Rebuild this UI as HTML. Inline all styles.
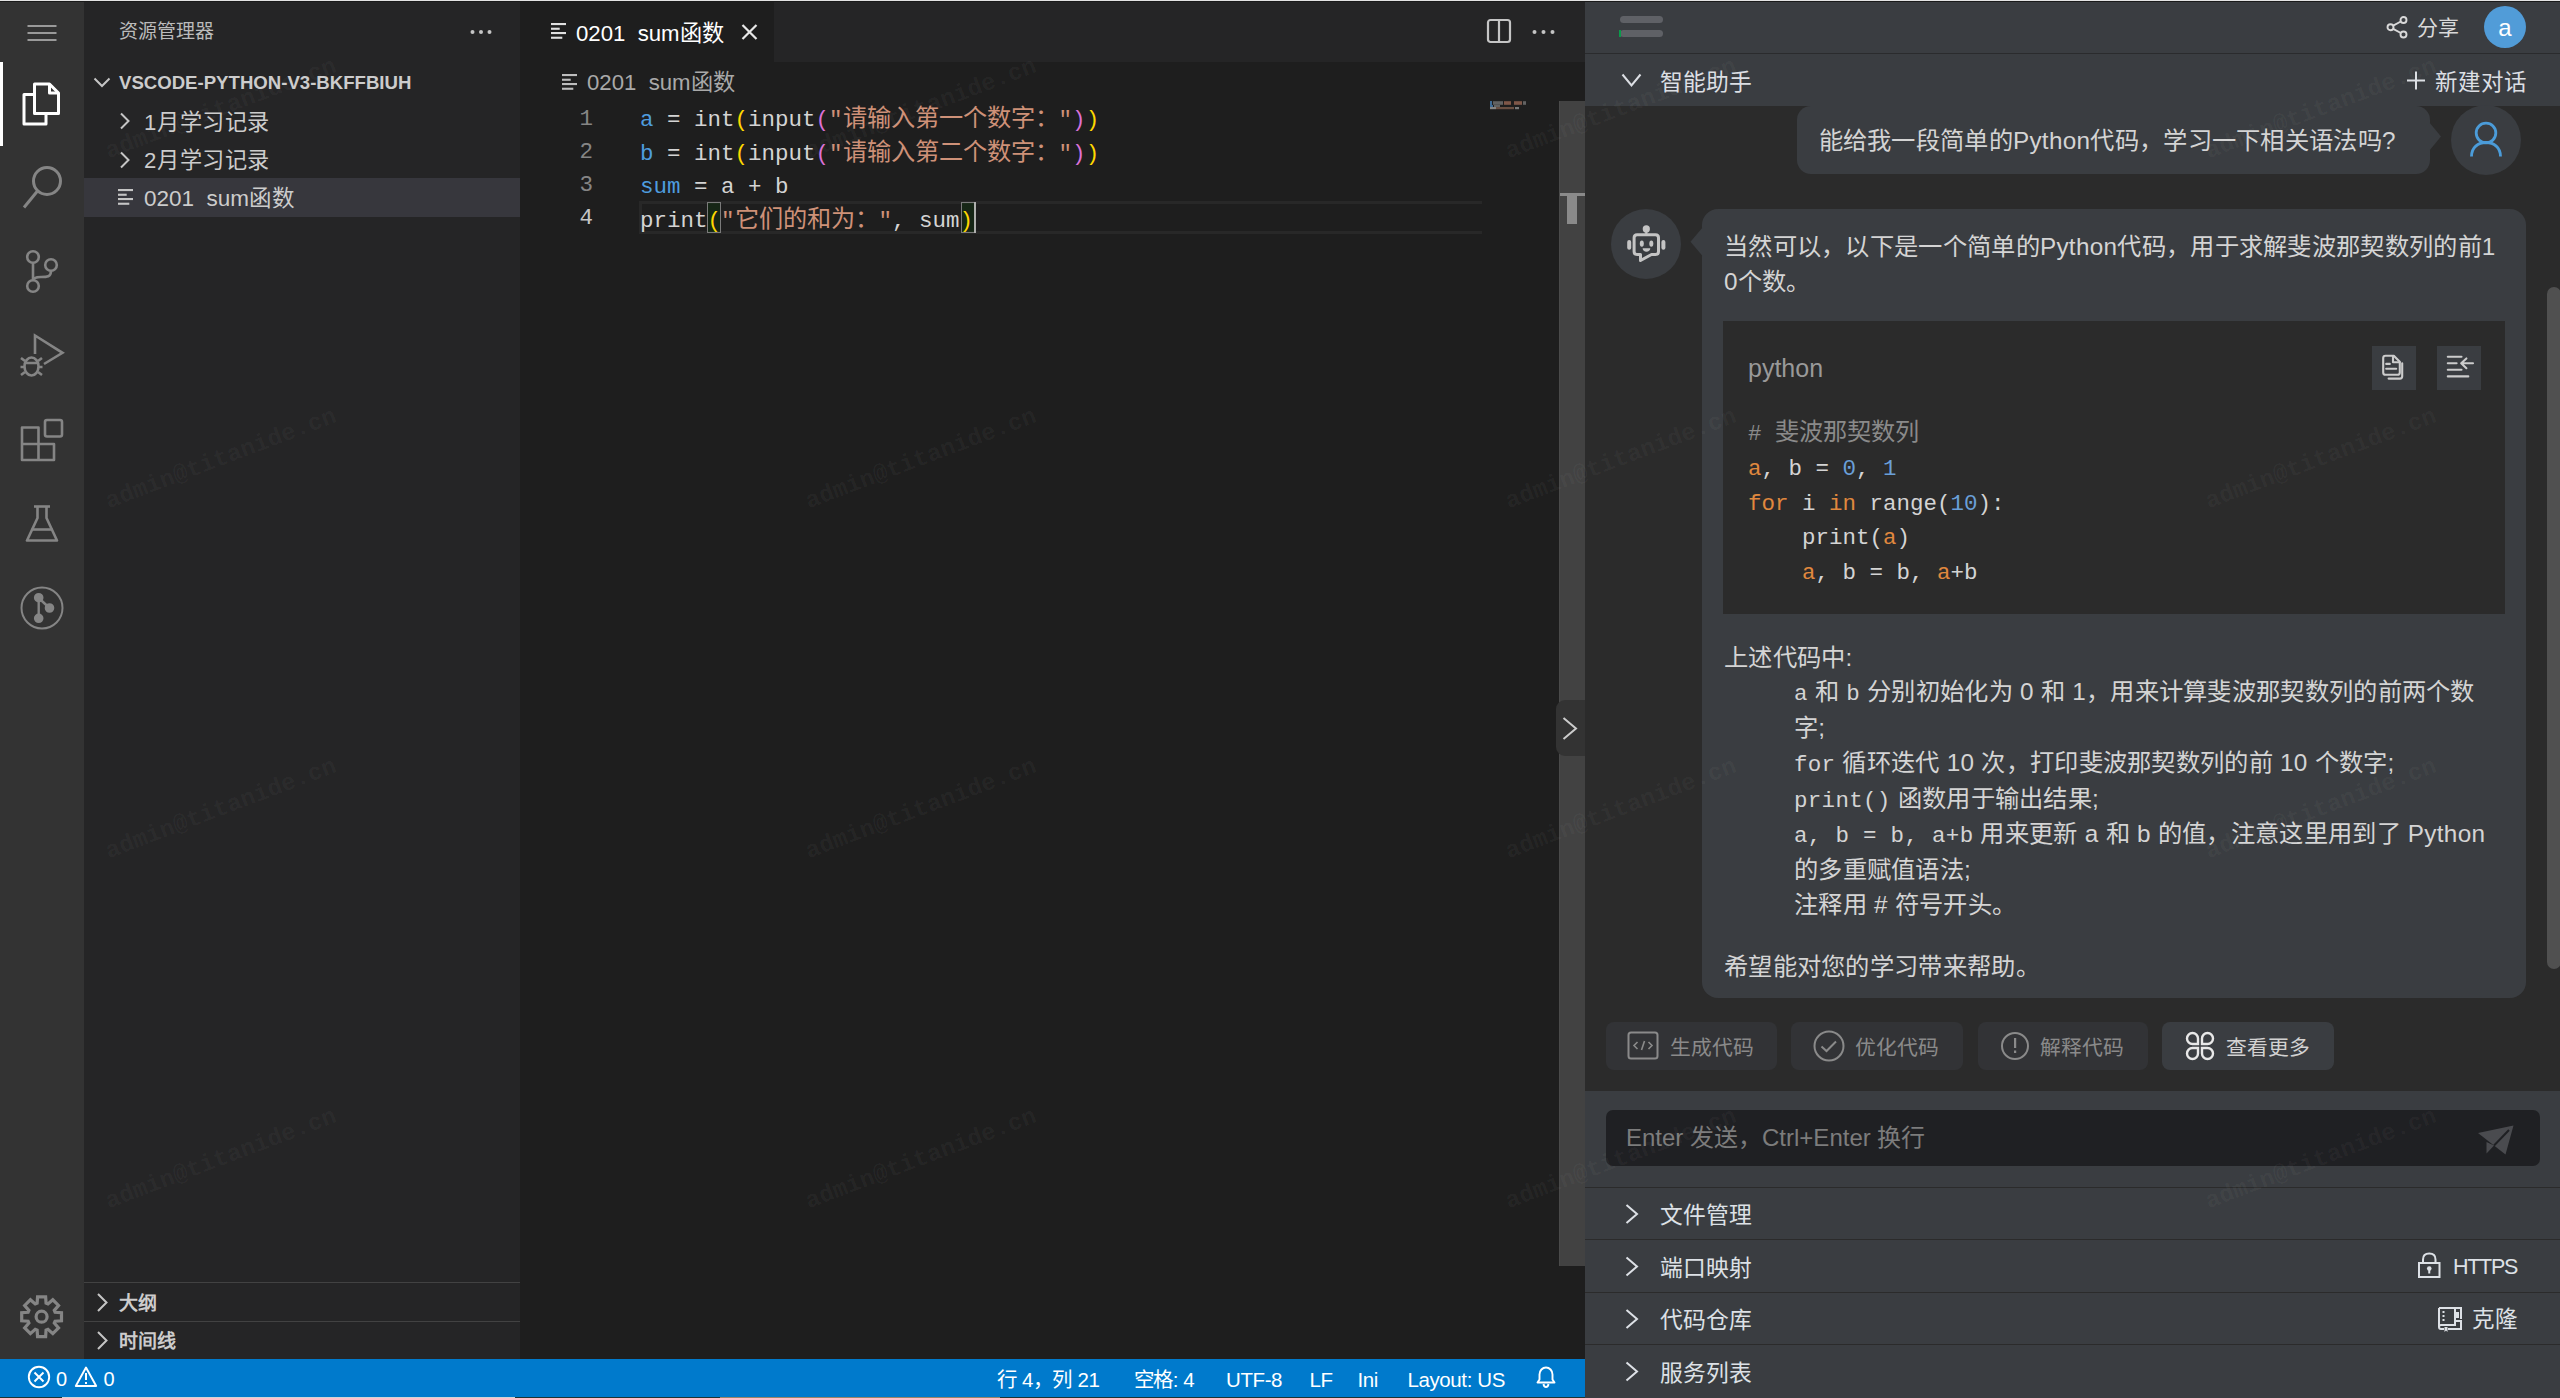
<!DOCTYPE html>
<html lang="zh-CN"><head><meta charset="utf-8">
<style>
*{margin:0;padding:0;box-sizing:border-box}
html,body{width:2560px;height:1398px;overflow:hidden;background:#1e1e1e;font-family:"Liberation Sans",sans-serif;color:#ccc}
.a{position:absolute}
.t{position:absolute;white-space:nowrap}
.mono{font-family:"Liberation Mono",monospace}
svg{position:absolute;overflow:visible}
.v{color:#4e9cde}.y{color:#ffd700}.p{color:#da70d6}.s{color:#ce9178}.c{font-size:24.2px}.o{color:#e0883e}.n{color:#6a9fd8}.wm{position:absolute;white-space:nowrap;font-family:"Liberation Mono",monospace;font-size:24px;line-height:24px;height:24px;color:rgba(255,255,255,0.045);transform-origin:0 100%;transform:rotate(-20.8deg);font-weight:bold;pointer-events:none}
.mc{font-family:"Liberation Mono",monospace;font-size:22.5px}
</style></head><body>
<!-- top border -->
<div class="a" style="left:0;top:0;width:2560px;height:1px;background:#e3e3e3"></div>
<div class="a" style="left:0;top:1px;width:2560px;height:1px;background:#1a1a1a"></div>

<!-- activity bar -->
<div class="a" style="left:0;top:2px;width:84px;height:1357px;background:#333333"></div>
<svg width="84" height="1359" style="left:0;top:0" viewBox="0 0 84 1359">
 <g stroke="#9a9a9a" stroke-width="2" stroke-linecap="butt">
  <line x1="27.5" y1="26" x2="56.5" y2="26"/><line x1="27.5" y1="33" x2="56.5" y2="33"/><line x1="27.5" y1="40" x2="56.5" y2="40"/>
 </g>
 <rect x="0" y="62" width="3" height="84" fill="#ffffff"/>
 <!-- files -->
 <g fill="none" stroke="#ffffff" stroke-width="3" stroke-linejoin="round">
  <path d="M34 94.5 H24 V124 H46 V114"/>
  <path d="M34.5 84 H49.5 L58.5 93 V113.5 H34.5 Z"/>
  <path d="M49.5 84 V93 H58.5"/>
 </g>
 <!-- search -->
 <g fill="none" stroke="#858585" stroke-width="3">
  <circle cx="47" cy="181" r="13.5"/>
  <line x1="37.5" y1="191" x2="24" y2="207.5"/>
 </g>
 <!-- source control -->
 <g fill="none" stroke="#858585" stroke-width="2.6">
  <circle cx="33" cy="257" r="5.8"/><circle cx="51" cy="265" r="5.8"/><circle cx="33" cy="286" r="5.8"/>
  <line x1="33" y1="263" x2="33" y2="280"/>
  <path d="M51 271 C51 277 47 277 41 277 C36 277 33 278 33 281"/>
 </g>
 <!-- run debug -->
 <g fill="none" stroke="#858585" stroke-width="2.6" stroke-linejoin="miter">
  <path d="M35 354 V335.5 L62.5 352.8 L44 364"/>
  <ellipse cx="31.5" cy="366.5" rx="7" ry="9"/>
  <path d="M24.5 363 H38.5 M21 358 L25 361 M42 358 L38 361 M21 375 L25 372 M42 375 L38 372 M20.5 367 H24.5 M38.5 367 H42.5"/>
 </g>
 <!-- extensions -->
 <g fill="none" stroke="#858585" stroke-width="2.6" stroke-linejoin="round">
  <path d="M22 427.5 H38.5 V444 H54 V460 H22 Z"/>
  <path d="M38.5 444 V460 M22 444 H38.5"/>
  <rect x="45" y="420" width="17" height="16.5" rx="2"/>
 </g>
 <!-- testing flask -->
 <g fill="none" stroke="#858585" stroke-width="2.6" stroke-linejoin="round">
  <path d="M34 506.5 H50"/>
  <path d="M37.5 506.5 V518 L27 540.5 H57 L46.5 518 V506.5"/>
  <path d="M31.5 529.5 H52.5"/>
 </g>
 <!-- remote explorer circle -->
 <g fill="none" stroke="#858585" stroke-width="2">
  <circle cx="42" cy="608" r="20.5"/>
 </g>
 <g stroke="#858585" stroke-width="2.4" fill="#858585">
  <line x1="38.7" y1="598" x2="38.7" y2="618"/><line x1="38.7" y1="598" x2="49.5" y2="608"/>
  <circle cx="38.7" cy="597.7" r="3.6"/><circle cx="49.5" cy="608" r="3.6"/><circle cx="38.7" cy="618.3" r="3.6"/>
 </g>
 <!-- gear -->
 <g fill="none" stroke="#858585" stroke-width="3.2" stroke-linejoin="miter">
  <path d="M37.13 1303.22 L37.57 1296.80 L45.63 1296.80 L46.07 1303.22 L47.97 1304.01 L52.82 1299.78 L58.52 1305.48 L54.29 1310.33 L55.08 1312.23 L61.50 1312.67 L61.50 1320.73 L55.08 1321.17 L54.29 1323.07 L58.52 1327.92 L52.82 1333.62 L47.97 1329.39 L46.07 1330.18 L45.63 1336.60 L37.57 1336.60 L37.13 1330.18 L35.23 1329.39 L30.38 1333.62 L24.68 1327.92 L28.91 1323.07 L28.12 1321.17 L21.70 1320.73 L21.70 1312.67 L28.12 1312.23 L28.91 1310.33 L24.68 1305.48 L30.38 1299.78 L35.23 1304.01 Z"/>
  <circle cx="41.6" cy="1316.7" r="5.5"/>
 </g>
</svg>
<!-- sidebar -->
<div class="a" style="left:84px;top:2px;width:436px;height:1357px;background:#252526"></div>
<div class="t" style="left:119px;top:20px;font-size:19px;line-height:24px;color:#bbbbbb">资源管理器</div>
<svg width="30" height="10" style="left:466px;top:27px"><circle cx="6.5" cy="5" r="2" fill="#c5c5c5"/><circle cx="15" cy="5" r="2" fill="#c5c5c5"/><circle cx="23.5" cy="5" r="2" fill="#c5c5c5"/></svg>
<svg width="24" height="20" style="left:90px;top:72px"><path d="M4.5 6.5 L12 14 L19.5 6.5" fill="none" stroke="#c5c5c5" stroke-width="2"/></svg>
<div class="t" style="left:119px;top:71px;font-size:18.6px;line-height:24px;font-weight:bold;color:#cccccc">VSCODE-PYTHON-V3-BKFFBIUH</div>
<svg width="20" height="24" style="left:115px;top:108px"><path d="M6 5.5 L13.5 13 L6 20.5" fill="none" stroke="#c5c5c5" stroke-width="2"/></svg>
<div class="t" style="left:144px;top:107.5px;font-size:22.2px;line-height:30px;color:#cccccc;letter-spacing:0.6px">1月学习记录</div>
<svg width="20" height="24" style="left:115px;top:146.5px"><path d="M6 5.5 L13.5 13 L6 20.5" fill="none" stroke="#c5c5c5" stroke-width="2"/></svg>
<div class="t" style="left:144px;top:146px;font-size:22.2px;line-height:30px;color:#cccccc;letter-spacing:0.6px">2月学习记录</div>
<div class="a" style="left:84px;top:178px;width:436px;height:39px;background:#37373d"></div>
<svg width="20" height="20" style="left:116px;top:187px"><g fill="#c5c5c5"><rect x="2" y="2" width="15" height="2.1"/><rect x="2" y="6.7" width="8.7" height="2.1"/><rect x="2" y="11" width="15" height="2.1"/><rect x="2" y="15.7" width="11.3" height="2.1"/></g></svg>
<div class="t" style="left:144px;top:184px;font-size:22.5px;line-height:30px;color:#cccccc">0201&nbsp; sum函数</div>
<div class="a" style="left:84px;top:1282px;width:436px;height:1px;background:#424242"></div>
<div class="a" style="left:84px;top:1321px;width:436px;height:1px;background:#424242"></div>
<svg width="20" height="24" style="left:93px;top:1290px"><path d="M5 4 L13.5 12.5 L5 21" fill="none" stroke="#c5c5c5" stroke-width="2"/></svg>
<div class="t" style="left:119px;top:1291px;font-size:19px;line-height:26px;font-weight:bold;color:#cccccc">大纲</div>
<svg width="20" height="24" style="left:93px;top:1328px"><path d="M5 4 L13.5 12.5 L5 21" fill="none" stroke="#c5c5c5" stroke-width="2"/></svg>
<div class="t" style="left:119px;top:1329px;font-size:19px;line-height:26px;font-weight:bold;color:#cccccc">时间线</div>
<!-- tab bar -->
<div class="a" style="left:520px;top:2px;width:1065px;height:60px;background:#252526"></div>
<div class="a" style="left:520px;top:2px;width:254px;height:60px;background:#1e1e1e"></div>
<svg width="20" height="20" style="left:549px;top:21px"><g fill="#e0e0e0"><rect x="2" y="2" width="15" height="2.1"/><rect x="2" y="6.7" width="8.7" height="2.1"/><rect x="2" y="11" width="15" height="2.1"/><rect x="2" y="15.7" width="11.3" height="2.1"/></g></svg>
<div class="t" style="left:576px;top:19px;font-size:22.2px;line-height:30px;color:#ffffff">0201&nbsp; sum函数</div>
<svg width="20" height="20" style="left:740px;top:22px"><path d="M2.5 3 L16.5 17 M16.5 3 L2.5 17" stroke="#e8e8e8" stroke-width="2.2"/></svg>
<svg width="30" height="30" style="left:1484px;top:16px"><rect x="4" y="4" width="22" height="22" rx="2.5" fill="none" stroke="#c5c5c5" stroke-width="2.2"/><line x1="15" y1="4" x2="15" y2="26" stroke="#c5c5c5" stroke-width="2.2"/></svg>
<svg width="30" height="10" style="left:1529px;top:27px"><circle cx="5.5" cy="5" r="2" fill="#c5c5c5"/><circle cx="14.5" cy="5" r="2" fill="#c5c5c5"/><circle cx="23.5" cy="5" r="2" fill="#c5c5c5"/></svg>
<!-- breadcrumb -->
<svg width="20" height="20" style="left:559.5px;top:71.5px"><g fill="#bdbdbd"><rect x="2" y="2" width="15" height="2.1"/><rect x="2" y="6.7" width="8.7" height="2.1"/><rect x="2" y="11" width="15" height="2.1"/><rect x="2" y="15.7" width="11.3" height="2.1"/></g></svg>
<div class="t" style="left:587px;top:68px;font-size:22.2px;line-height:30px;color:#a9a9a9">0201&nbsp; sum函数</div>
<!-- code -->
<div class="a" style="left:639px;top:201px;width:843px;height:33px;border:3px solid #282828;border-right:none"></div>
<div class="a" style="left:707px;top:202px;width:14px;height:31px;border:1px solid #7a7a7a;background:#0a320a66"></div>
<div class="a" style="left:961px;top:202px;width:13.5px;height:31px;border:1px solid #7a7a7a;background:#0a320a66"></div>
<div class="a" style="left:973.5px;top:202px;width:2.5px;height:31px;background:#aeafad"></div>
<div class="t mono" style="left:560px;top:102.5px;width:33px;text-align:right;font-size:22.5px;line-height:33.25px;color:#858585">1<br>2<br>3<br><span style="color:#c6c6c6">4</span></div>
<div class="t mono" style="left:640px;top:102.5px;font-size:22.5px;line-height:33.25px;color:#d4d4d4"><span class="v">a</span> = int<span class="y">(</span>input<span class="p">(</span><span class="s">"<span class="c">请输入第一个数字：</span>"</span><span class="p">)</span><span class="y">)</span><br><span class="v">b</span> = int<span class="y">(</span>input<span class="p">(</span><span class="s">"<span class="c">请输入第二个数字：</span>"</span><span class="p">)</span><span class="y">)</span><br><span class="v">sum</span> = a + b<br>print<span class="y">(</span><span class="s">"<span class="c">它们的和为：</span>"</span>, sum<span class="y">)</span></div>
<!-- minimap -->
<svg width="40" height="12" style="left:1489px;top:100px;opacity:0.7"><g>
<rect x="1" y="1" width="2" height="4" fill="#4e8cc8"/><rect x="4" y="1.2" width="10" height="3.6" fill="#808080"/><rect x="15" y="1.2" width="7" height="3.6" fill="#a8705a"/><rect x="25" y="1.2" width="8" height="3.6" fill="#a8705a"/><rect x="34" y="1.2" width="3" height="3.6" fill="#808080"/>
<rect x="1" y="5" width="3" height="2" fill="#4e8cc8"/><rect x="5" y="5" width="6" height="2" fill="#808080"/>
<rect x="1" y="7" width="6" height="2.2" fill="#b0b0b0"/><rect x="7" y="7" width="18" height="2.2" fill="#8a6552"/><rect x="26" y="7" width="4" height="2.2" fill="#a0a0a0"/>
</g></svg>
<!-- editor scrollbar column -->
<div class="a" style="left:1559px;top:101px;width:26px;height:1165px;background:#424242;border-left:1px solid #4a4a4a"></div>
<div class="a" style="left:1560px;top:192.5px;width:25px;height:3px;background:#8a8a8a"></div>
<div class="a" style="left:1567px;top:195px;width:10px;height:29px;background:#8a8a8a"></div>
<div class="a" style="left:1556px;top:700px;width:29px;height:56px;background:#333333;border-radius:9px 0 0 9px"></div>
<svg width="20" height="30" style="left:1560px;top:713px"><path d="M3.5 5 L16 15.5 L3.5 26" fill="none" stroke="#cccccc" stroke-width="2"/></svg>
<!-- status bar -->
<div class="a" style="left:0;top:1359px;width:1585px;height:38px;background:#007acc"></div>
<div class="a" style="left:0;top:1397px;width:1585px;height:1px;background:#1d3434"></div><div class="a" style="left:62px;top:1397px;width:453px;height:1px;background:#d4d4d4"></div><div class="a" style="left:720px;top:1397px;width:280px;height:1px;background:#9a8468"></div>
<svg width="130" height="38" style="left:0;top:1359px"><g fill="none" stroke="#ffffff" stroke-width="1.9"><circle cx="39" cy="18" r="10.2"/><path d="M34.5 13.5 L43.5 22.5 M43.5 13.5 L34.5 22.5"/><path d="M86 8.5 L96.2 27 H75.8 Z" stroke-linejoin="round"/></g><rect x="85" y="14" width="2" height="7" fill="#fff"/><rect x="85" y="23" width="2" height="2" fill="#fff"/></svg>
<div class="t" style="left:56px;top:1367px;font-size:20px;line-height:24px;color:#fff">0</div>
<div class="t" style="left:103.5px;top:1367px;font-size:20px;line-height:24px;color:#fff">0</div>
<div class="t" style="left:997px;top:1367.5px;font-size:20.5px;line-height:24px;letter-spacing:-0.4px;color:#fff">行 4，列 21</div>
<div class="t" style="left:1133.5px;top:1367.5px;font-size:20.5px;line-height:24px;letter-spacing:-0.4px;color:#fff">空格: 4</div>
<div class="t" style="left:1226px;top:1367.5px;font-size:20.5px;line-height:24px;letter-spacing:-0.4px;color:#fff">UTF-8</div>
<div class="t" style="left:1309.5px;top:1367.5px;font-size:20.5px;line-height:24px;letter-spacing:-0.4px;color:#fff">LF</div>
<div class="t" style="left:1357.5px;top:1367.5px;font-size:20.5px;line-height:24px;letter-spacing:-0.4px;color:#fff">Ini</div>
<div class="t" style="left:1407.5px;top:1367.5px;font-size:20.5px;line-height:24px;letter-spacing:-0.4px;color:#fff">Layout: US</div>
<svg width="24" height="24" style="left:1534px;top:1365px"><path d="M3.5 17.5 H20.5 L18.5 14.5 V9.5 C18.5 5.5 15.5 2.5 12 2.5 C8.5 2.5 5.5 5.5 5.5 9.5 V14.5 Z M9.5 19 C9.8 21 10.8 22 12 22 C13.2 22 14.2 21 14.5 19" fill="none" stroke="#fff" stroke-width="1.9" stroke-linejoin="round"/></svg>

<!-- RIGHT PANEL -->
<div class="a" style="left:1585px;top:2px;width:975px;height:1396px;background:#2b2b2b"></div>
<div class="a" style="left:1585px;top:2px;width:975px;height:51px;background:#3a3d41"></div>
<div class="a" style="left:1585px;top:53px;width:975px;height:1px;background:#2a2b2d"></div>
<div class="a" style="left:1585px;top:54px;width:975px;height:52px;background:#3a3d41"></div>
<!-- logo -->
<div class="a" style="left:1619.5px;top:16px;width:43.5px;height:7px;border-radius:3.5px;background:#5f6166"></div>
<div class="a" style="left:1619.5px;top:30px;width:43.5px;height:7px;border-radius:3.5px;background:#5f6166"></div>
<div class="a" style="left:1619px;top:30px;width:2px;height:7px;background:#0a9a4a"></div>
<!-- share -->
<svg width="26" height="26" style="left:2384px;top:14px"><g fill="none" stroke="#d9d9d9" stroke-width="1.9"><circle cx="19.5" cy="6" r="3"/><circle cx="6.5" cy="13.2" r="3"/><circle cx="19.5" cy="20.5" r="3"/><path d="M9.2 11.6 L16.8 7.5 M9.2 14.8 L16.8 19"/></g></svg>
<div class="t" style="left:2417px;top:15px;font-size:21px;line-height:26px;color:#d9d9d9">分享</div>
<div class="a" style="left:2484px;top:6px;width:42px;height:42px;border-radius:50%;background:#519cd8"></div>
<div class="t" style="left:2484px;top:12.5px;width:42px;text-align:center;font-size:24px;line-height:30px;color:#fff">a</div>
<!-- section header -->
<svg width="24" height="20" style="left:1620px;top:70px"><path d="M2.5 4.5 L11.5 15.5 L20.5 4.5" fill="none" stroke="#dcdfe4" stroke-width="2"/></svg>
<div class="t" style="left:1660px;top:66.5px;font-size:22.8px;line-height:30px;color:#dcdfe4">智能助手</div>
<svg width="22" height="22" style="left:2405px;top:70px"><path d="M11 1.5 V19.5 M2 10.5 H20" fill="none" stroke="#dcdfe4" stroke-width="2"/></svg>
<div class="t" style="left:2435px;top:67.5px;font-size:22.5px;line-height:30px;color:#dcdfe4">新建对话</div>
<!-- user bubble -->
<div class="a" style="left:1797px;top:106px;width:633px;height:68px;border-radius:14px;background:#3a3d41"></div>
<svg width="14" height="30" style="left:2429px;top:122px"><path d="M0 0 L12 14.6 L0 29 Z" fill="#3a3d41"/></svg>
<div class="t" style="left:1818.5px;top:124.5px;font-size:24.3px;line-height:32px;color:#d4d4d4;letter-spacing:0.3px">能给我一段简单的Python代码，学习一下相关语法吗?</div>
<div class="a" style="left:2451px;top:105px;width:70px;height:70px;border-radius:50%;background:#3a3d41"></div>
<svg width="40" height="40" style="left:2466px;top:120px"><g fill="none" stroke="#4b9cd9" stroke-width="2.8"><circle cx="20" cy="13" r="9.8"/><path d="M5.5 36.5 C5.5 27.5 12 22.5 20 22.5 C28 22.5 34.5 27.5 34.5 36.5"/></g></svg>
<!-- bot avatar -->
<div class="a" style="left:1611px;top:209px;width:70px;height:70px;border-radius:50%;background:#3a3d41"></div>
<svg width="46" height="42" style="left:1624px;top:223px"><g fill="#c4c4c4"><circle cx="22.3" cy="5.9" r="3.6"/><rect x="21.2" y="8" width="2.2" height="4"/><rect x="3.2" y="17" width="4" height="9.8" rx="2"/><rect x="37.4" y="17" width="4" height="9.8" rx="2"/><ellipse cx="17.8" cy="20.6" rx="2" ry="3.2"/><ellipse cx="27.3" cy="20.6" rx="2" ry="3.2"/><path d="M18.6 25.3 H26.3 C26.3 27.5 24.5 28.8 22.45 28.8 C20.4 28.8 18.6 27.5 18.6 25.3 Z"/></g><path d="M16.5 31.5 H13.1 Q10.1 31.5 10.1 28.5 V14.7 Q10.1 11.7 13.1 11.7 H31.5 Q34.5 11.7 34.5 14.7 V28.5 Q34.5 31.5 31.5 31.5 H27.5 L16.5 37.5 Z" fill="none" stroke="#c4c4c4" stroke-width="3" stroke-linejoin="round"/></svg>
<!-- bot bubble -->
<div class="a" style="left:1702px;top:209px;width:824px;height:789px;border-radius:16px;background:#3a3d41"></div>
<svg width="14" height="30" style="left:1689px;top:227px"><path d="M14 0 L1.5 14.8 L14 29.5 Z" fill="#3a3d41"/></svg>
<div class="t" style="left:1724px;top:228.5px;font-size:24.3px;line-height:35px;color:#d4d4d4;letter-spacing:0.3px">当然可以，以下是一个简单的Python代码，用于求解斐波那契数列的前1<br>0个数。</div>
<div class="a" style="left:1723px;top:321px;width:782px;height:293px;background:#2b2b2b"></div>
<div class="t" style="left:1748px;top:352px;font-size:25px;line-height:32px;color:#999999">python</div>
<div class="a" style="left:2372px;top:346px;width:44px;height:44px;background:#3a3d41"></div>
<svg width="44" height="44" style="left:2372px;top:346px"><g fill="none" stroke="#cccccc" stroke-width="2.1" stroke-linejoin="round" stroke-linecap="round"><path d="M13.5 9.8 H21.8 L27.8 15.8 V26.5 C27.8 28 27 28.8 25.5 28.8 H13.5 C12 28.8 11.2 28 11.2 26.5 V12.1 C11.2 10.6 12 9.8 13.5 9.8 Z"/><path d="M21 10.2 V16.3 H27.5"/><path d="M30.2 17.3 V30.2 C30.2 31.7 29.4 32.6 27.9 32.6 H16.6"/><path d="M14.2 17.9 H17.8 M14.2 22.8 H24.2"/></g></svg>
<div class="a" style="left:2437px;top:346px;width:44px;height:44px;background:#3a3d41"></div>
<svg width="44" height="44" style="left:2437px;top:346px"><g fill="none" stroke="#cccccc" stroke-width="2.1" stroke-linecap="round"><path d="M10.8 10.8 H24.5 M10.8 17.2 H19.6 M10.8 23.8 H24.5 M10.8 30.4 H31.3"/><path d="M36 17.2 H24.5 M29.4 12.4 L24.2 17.2 L29.4 22.2" stroke-linejoin="round"/></g></svg>
<div class="t mono" style="left:1748px;top:417px;font-size:22.5px;line-height:34.8px;color:#d4d4d4;white-space:pre"><span style="color:#8a8a8a"># <span class="c">斐波那契数列</span></span><br><span class="o">a</span>, b = <span class="n">0</span>, <span class="n">1</span><br><span class="o">for</span> i <span class="o">in</span> range(<span class="n">10</span>):<br>    print(<span class="o">a</span>)<br>    <span class="o">a</span>, b = b, <span class="o">a</span>+b</div>
<div class="t" style="left:1724px;top:639.5px;font-size:24.3px;line-height:35.8px;color:#d4d4d4;letter-spacing:0.3px">上述代码中:</div>
<div class="t" style="left:1794px;top:676.0px;font-size:24.3px;line-height:32px;color:#d4d4d4;letter-spacing:0.3px"><span class="mc">a</span> 和 <span class="mc">b</span> 分别初始化为 0 和 1，用来计算斐波那契数列的前两个数</div>
<div class="t" style="left:1794px;top:711.5px;font-size:24.3px;line-height:32px;color:#d4d4d4;letter-spacing:0.3px">字;</div>
<div class="t" style="left:1794px;top:747.0px;font-size:24.3px;line-height:32px;color:#d4d4d4;letter-spacing:0.3px"><span class="mc">for</span> 循环迭代 10 次，打印斐波那契数列的前 10 个数字;</div>
<div class="t" style="left:1794px;top:782.5px;font-size:24.3px;line-height:32px;color:#d4d4d4;letter-spacing:0.3px"><span class="mc">print()</span> 函数用于输出结果;</div>
<div class="t" style="left:1794px;top:818.0px;font-size:24.3px;line-height:32px;color:#d4d4d4;letter-spacing:0.3px"><span class="mc">a, b = b, a+b</span> 用来更新 a 和 b 的值，注意这里用到了 Python</div>
<div class="t" style="left:1794px;top:853.5px;font-size:24.3px;line-height:32px;color:#d4d4d4;letter-spacing:0.3px">的多重赋值语法;</div>
<div class="t" style="left:1794px;top:889.0px;font-size:24.3px;line-height:32px;color:#d4d4d4;letter-spacing:0.3px">注释用 # 符号开头。</div>

<div class="t" style="left:1724px;top:951px;font-size:24.3px;line-height:32px;color:#d4d4d4;letter-spacing:0.3px">希望能对您的学习带来帮助。</div>
<!-- chat scrollbar -->
<div class="a" style="left:2547px;top:287px;width:14px;height:682px;border-radius:7px;background:#505050"></div>
<!-- action buttons -->
<div class="a" style="left:1606px;top:1022px;width:171px;height:48px;border-radius:8px;background:#323336"></div>
<div class="a" style="left:1791px;top:1022px;width:171.5px;height:48px;border-radius:8px;background:#323336"></div>
<div class="a" style="left:1977.5px;top:1022px;width:170px;height:48px;border-radius:8px;background:#323336"></div>
<div class="a" style="left:2162px;top:1022px;width:172px;height:48px;border-radius:8px;background:#3a3d41"></div>
<svg width="36" height="36" style="left:1625px;top:1028px"><rect x="3.5" y="4.5" width="29" height="26" rx="2.5" fill="none" stroke="#8a8a8a" stroke-width="2"/><path d="M12.5 14 L9 17.5 L12.5 21 M23.5 14 L27 17.5 L23.5 21 M19.5 13 L16.5 22" fill="none" stroke="#8a8a8a" stroke-width="1.6"/></svg>
<div class="t" style="left:1669.5px;top:1033px;font-size:20.8px;line-height:30px;color:#8a8a8a">生成代码</div>
<svg width="36" height="36" style="left:1811px;top:1028px"><circle cx="18" cy="18" r="14.5" fill="none" stroke="#8a8a8a" stroke-width="2"/><path d="M10.5 18.5 L15.5 23 L25 13.5" fill="none" stroke="#8a8a8a" stroke-width="2"/></svg>
<div class="t" style="left:1855px;top:1033px;font-size:20.8px;line-height:30px;color:#8a8a8a">优化代码</div>
<svg width="36" height="36" style="left:1996.5px;top:1028px"><circle cx="18" cy="18" r="13" fill="none" stroke="#8a8a8a" stroke-width="2"/><rect x="17" y="10" width="2.2" height="10" fill="#8a8a8a"/><rect x="17" y="22.5" width="2.2" height="2.5" fill="#8a8a8a"/></svg>
<div class="t" style="left:2040px;top:1033px;font-size:20.8px;line-height:30px;color:#8a8a8a">解释代码</div>
<svg width="36" height="36" style="left:2182px;top:1028px"><g fill="none" stroke="#e8e8e8" stroke-width="2.4"><path d="M16 16 H10.5 A5.5 5.5 0 1 1 16 10.5 Z"/><path d="M20 16 H25.5 A5.5 5.5 0 1 0 20 10.5 Z"/><path d="M16 20 H10.5 A5.5 5.5 0 1 0 16 25.5 Z"/><path d="M20 20 H25.5 A5.5 5.5 0 1 1 20 25.5 Z"/></g></svg>
<div class="t" style="left:2226px;top:1032.5px;font-size:20.8px;line-height:30px;color:#d2d2d2">查看更多</div>
<!-- input -->
<div class="a" style="left:1585px;top:1091px;width:975px;height:96px;background:#3a3d41"></div>
<div class="a" style="left:1606px;top:1110px;width:934px;height:56px;border-radius:7px;background:#1f2023"></div>
<div class="t" style="left:1626px;top:1122px;font-size:24px;line-height:32px;color:#7c7c7c">Enter 发送，Ctrl+Enter 换行</div>
<svg width="40" height="34" style="left:2476px;top:1122px"><path d="M2 11 L37.5 3.5 L29.5 32.5 L18 23.5 Z M18 23.5 L10.5 31.5 V20" fill="#4a4b4f"/><path d="M18 23.5 L33 8" stroke="#1f2023" stroke-width="2"/></svg>
<!-- sections -->
<div class="a" style="left:1585px;top:1187px;width:975px;height:211px;background:#3a3d41"></div>
<div class="a" style="left:1585px;top:1187px;width:975px;height:1px;background:#2b2b2b"></div>
<div class="a" style="left:1585px;top:1239px;width:975px;height:1px;background:#2b2b2b"></div>
<div class="a" style="left:1585px;top:1292px;width:975px;height:1px;background:#2b2b2b"></div>
<div class="a" style="left:1585px;top:1344px;width:975px;height:1px;background:#2b2b2b"></div>
<svg width="20" height="200" style="left:1622px;top:1195px"><g fill="none" stroke="#dde1e6" stroke-width="2"><path d="M4.5 10 L15 19 L4.5 28"/><path d="M4.5 62.5 L15 71.5 L4.5 80.5"/><path d="M4.5 115 L15 124 L4.5 133"/><path d="M4.5 167.5 L15 176.5 L4.5 185.5"/></g></svg>
<div class="t" style="left:1660px;top:1200px;font-size:22.8px;line-height:30px;color:#dde1e6">文件管理</div>
<div class="t" style="left:1660px;top:1252.5px;font-size:22.8px;line-height:30px;color:#dde1e6">端口映射</div>
<div class="t" style="left:1660px;top:1305px;font-size:22.8px;line-height:30px;color:#dde1e6">代码仓库</div>
<div class="t" style="left:1660px;top:1357.5px;font-size:22.8px;line-height:30px;color:#dde1e6">服务列表</div>
<svg width="26" height="28" style="left:2416px;top:1251px"><g fill="none" stroke="#dde1e6" stroke-width="2"><rect x="3" y="12" width="20.5" height="14"/><path d="M7 12 V8.5 C7 4.5 9.5 2.5 13.25 2.5 C17 2.5 19.5 4.5 19.5 8.5 V12"/></g><circle cx="13.25" cy="17.5" r="2.3" fill="#dde1e6"/><rect x="12.25" y="18" width="2" height="4.5" fill="#dde1e6"/></svg>
<div class="t" style="left:2453px;top:1252px;font-size:21.5px;line-height:30px;color:#dde1e6;letter-spacing:-1.3px">HTTPS</div>
<svg width="28" height="28" style="left:2436px;top:1304px"><g fill="none" stroke="#dde1e6" stroke-width="2"><path d="M3 4 H19 V21 H5 C3.8 21 3 22 3 23 C3 24 3.8 25 5 25 H8"/><path d="M3 4 V23"/><path d="M12 25 H25 V17 H19"/><path d="M19 4 H25 V15"/></g><path d="M8.5 23 V28 L10 26.5 L11.5 28 V23 Z" fill="#dde1e6"/><rect x="6.5" y="7" width="2" height="2" fill="#dde1e6"/><rect x="6.5" y="11" width="2" height="2" fill="#dde1e6"/><rect x="6.5" y="15" width="2" height="2" fill="#dde1e6"/><rect x="20" y="8" width="3" height="6" fill="#dde1e6"/></svg>
<div class="t" style="left:2472px;top:1305px;font-size:22.5px;line-height:30px;color:#dde1e6">克隆</div>

<!-- watermark -->
<div class="wm" style="left:111px;top:140px">admin@titanide.cn</div>
<div class="wm" style="left:811px;top:140px">admin@titanide.cn</div>
<div class="wm" style="left:1511px;top:140px">admin@titanide.cn</div>
<div class="wm" style="left:2211px;top:140px">admin@titanide.cn</div>
<div class="wm" style="left:111px;top:490px">admin@titanide.cn</div>
<div class="wm" style="left:811px;top:490px">admin@titanide.cn</div>
<div class="wm" style="left:1511px;top:490px">admin@titanide.cn</div>
<div class="wm" style="left:2211px;top:490px">admin@titanide.cn</div>
<div class="wm" style="left:111px;top:840px">admin@titanide.cn</div>
<div class="wm" style="left:811px;top:840px">admin@titanide.cn</div>
<div class="wm" style="left:1511px;top:840px">admin@titanide.cn</div>
<div class="wm" style="left:2211px;top:840px">admin@titanide.cn</div>
<div class="wm" style="left:111px;top:1190px">admin@titanide.cn</div>
<div class="wm" style="left:811px;top:1190px">admin@titanide.cn</div>
<div class="wm" style="left:1511px;top:1190px">admin@titanide.cn</div>
<div class="wm" style="left:2211px;top:1190px">admin@titanide.cn</div>
</body></html>
